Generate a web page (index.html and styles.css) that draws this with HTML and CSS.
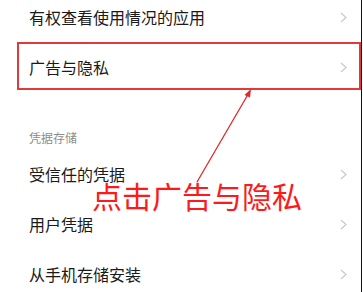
FILE: index.html
```html
<!DOCTYPE html>
<html lang="zh">
<head>
<meta charset="utf-8">
<link rel="stylesheet" href="styles.css">
</head>
<body>
<main class="screen">
  <div class="row row-first">
    <span class="label">有权查看使用情况的应用</span>
    <svg class="chev" width="7" height="11" viewBox="0 0 7 11"><polyline points="1,1 6,5.5 1,10" fill="none" stroke="#c9c9c9" stroke-width="1.2"/></svg>
  </div>
  <div class="row row-boxed">
    <span class="label">广告与隐私</span>
    <svg class="chev" width="7" height="11" viewBox="0 0 7 11"><polyline points="1,1 6,5.5 1,10" fill="none" stroke="#c9c9c9" stroke-width="1.2"/></svg>
  </div>
  <div class="section-title">凭据存储</div>
  <div class="row">
    <span class="label">受信任的凭据</span>
    <svg class="chev" width="7" height="11" viewBox="0 0 7 11"><polyline points="1,1 6,5.5 1,10" fill="none" stroke="#c9c9c9" stroke-width="1.2"/></svg>
  </div>
  <div class="row">
    <span class="label">用户凭据</span>
    <svg class="chev" width="7" height="11" viewBox="0 0 7 11"><polyline points="1,1 6,5.5 1,10" fill="none" stroke="#c9c9c9" stroke-width="1.2"/></svg>
  </div>
  <div class="row">
    <span class="label">从手机存储安装</span>
    <svg class="chev" width="7" height="11" viewBox="0 0 7 11"><polyline points="1,1 6,5.5 1,10" fill="none" stroke="#c9c9c9" stroke-width="1.2"/></svg>
  </div>

  <svg class="arrow" width="363" height="292" viewBox="0 0 363 292">
    <line x1="197" y1="182" x2="250" y2="91" stroke="#e0282a" stroke-width="1.3"/>
    <polygon points="251,89 244.5,95 250,97.5" fill="#e0282a"/>
  </svg>
  <div class="callout">点击广告与隐私</div>
</main>
</body>
</html>
```

FILE: styles.css
```css
html, body {
  margin: 0;
  padding: 0;
  background: #ffffff;
}
body {
  font-family: "Noto Sans CJK SC", "Noto Sans", sans-serif;
  color: #1a1a1a;
}
.screen {
  position: relative;
  width: 361px;
  height: 292px;
  border-right: 1px solid #111111;
  display: flex;
  flex-direction: column;
  overflow: hidden;
}
.row {
  height: 50px;
  flex: none;
  display: flex;
  align-items: center;
  justify-content: space-between;
  padding: 0 14px 0 29px;
  box-sizing: border-box;
}
.label {
  font-size: 16px;
  line-height: 17px;
}
.row-first {
  height: 34px;
  margin-bottom: 8px;
}
.row-boxed {
  height: 48px;
  margin-left: 17px;
  padding: 3px 12px 0 10px;
  border: 2px solid #e03a3a;
}
.section-title {
  margin-top: 35px;
  height: 24px;
  flex: none;
  display: flex;
  align-items: center;
  padding-left: 29px;
  font-size: 12px;
  color: #8c8c8c;
}
.chev {
  display: block;
}
.arrow {
  position: absolute;
  left: 0;
  top: 0;
  pointer-events: none;
}
.callout {
  position: absolute;
  left: 92px;
  top: 182px;
  font-size: 30px;
  line-height: 27px;
  color: #ff1a1a;
  white-space: nowrap;
}
```
